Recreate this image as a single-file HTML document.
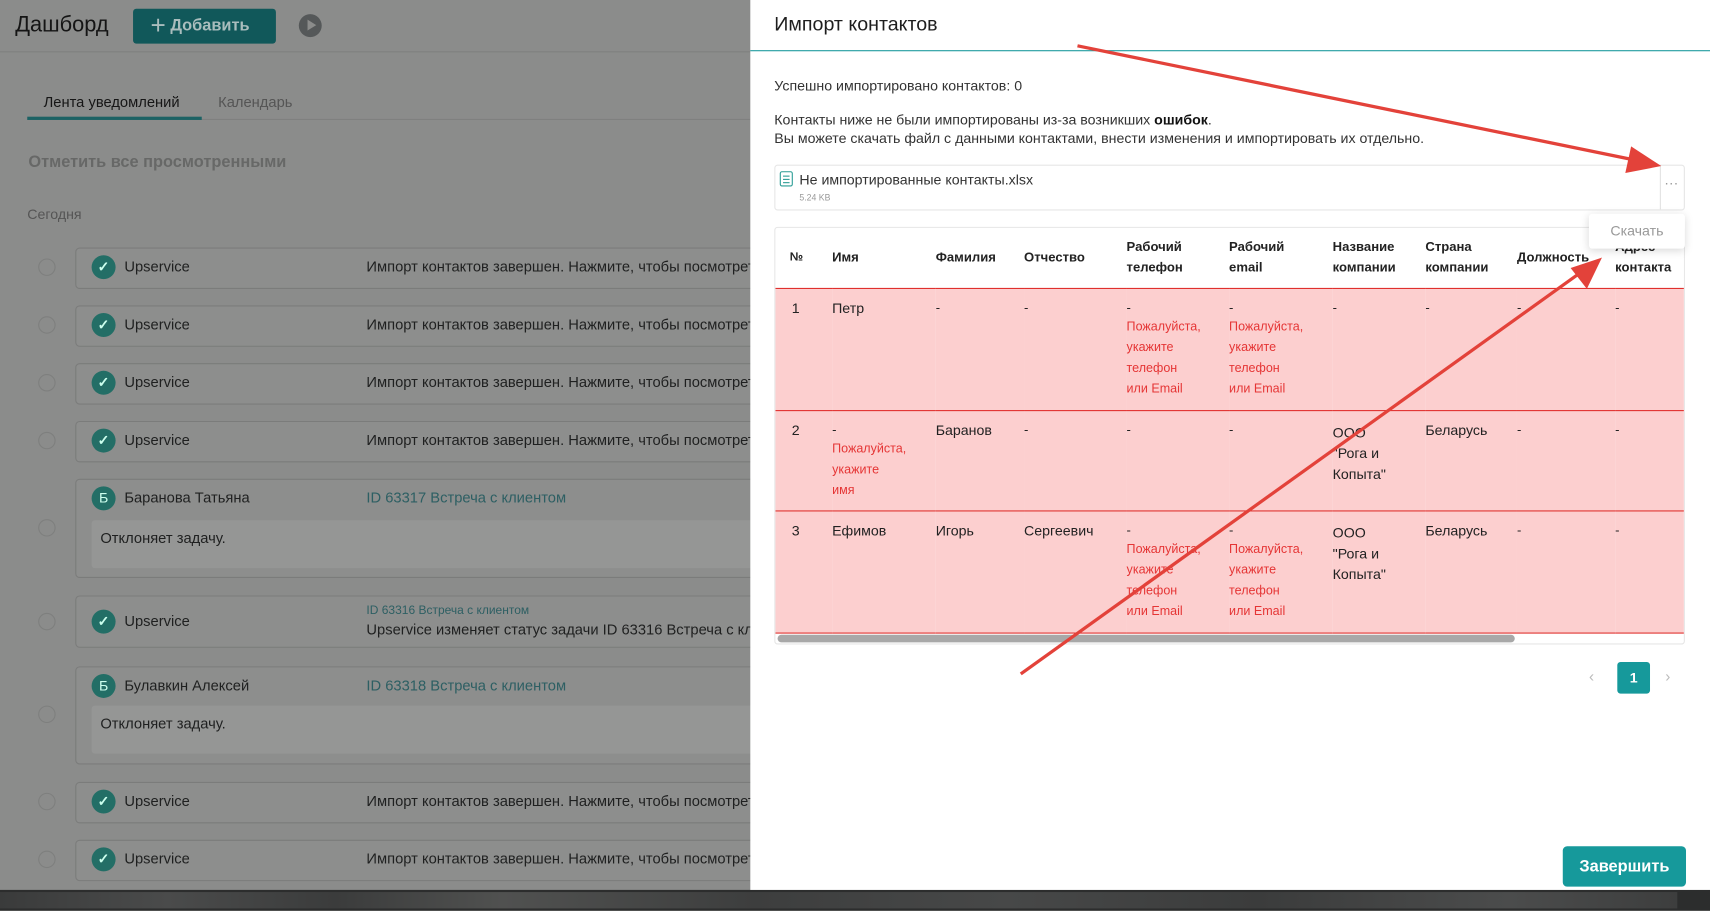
<!DOCTYPE html>
<html><head><meta charset="utf-8"><style>
*{box-sizing:border-box;margin:0;padding:0}
html,body{width:1710px;height:911px;overflow:hidden;background:#8b8c8b}
#s{position:absolute;left:0;top:0;width:1568px;height:835px;transform:scale(1.09056);transform-origin:0 0;font-family:"Liberation Sans",sans-serif;color:#222}
.a{position:absolute;white-space:nowrap}
.card{position:absolute;left:69px;width:640px;border:1px solid #7b7c7b;border-radius:4px;background:#8d8e8d}
.rad{position:absolute;left:35px;width:16px;height:16px;border:1px solid #7e7f7e;border-radius:50%}
.ic{position:absolute;left:84px;width:22px;height:22px;border-radius:50%;background:#236e66;color:#cfe;font-size:13px;text-align:center;line-height:22px;font-weight:bold}
.t{font-size:13.5px;color:#1f2020}
.lk{color:#2d5f63}
th,td{font-size:12px}
.red{color:#e53535;font-size:11.5px;line-height:19px}
</style></head><body><div id="s">
<div class="a" style="left:14px;top:12px;font-size:20px;color:#151515">Дашборд</div>
<div class="a" style="left:122px;top:8px;width:131px;height:32px;background:#11585a;border-radius:3px;color:#a9bdbd;font-size:15px;font-weight:bold;line-height:32px;padding-left:16px"><span style="font-size:24px;font-weight:normal;vertical-align:-3px">+</span> Добавить</div>
<div class="a" style="left:274px;top:13px;width:21px;height:21px;border-radius:50%;background:#555859"></div>
<div class="a" style="left:282px;top:18px;border-left:8px solid #8b8c8b;border-top:5.5px solid transparent;border-bottom:5.5px solid transparent"></div>
<div class="a" style="left:0;top:47px;width:688px;height:1px;background:#7f807f"></div>
<div class="a t" style="left:40px;top:86px;color:#161616">Лента уведомлений</div>
<div class="a t" style="left:200px;top:86px;color:#555">Календарь</div>
<div class="a" style="left:25px;top:109px;width:663px;height:1px;background:#7f807f"></div>
<div class="a" style="left:25px;top:107px;width:160px;height:3px;background:#1c6264"></div>
<div class="a" style="left:26px;top:140px;font-size:15px;font-weight:bold;color:#676867">Отметить все просмотренными</div>
<div class="a" style="left:25px;top:189px;font-size:13px;color:#555">Сегодня</div>

<div class="rad" style="top:237px"></div><div class="card" style="top:227px;height:38px"></div><div class="ic" style="top:234px">✓</div><div class="a t" style="left:114px;top:237px">Upservice</div><div class="a t" style="left:336px;top:237px">Импорт контактов завершен. Нажмите, чтобы посмотреть</div>
<div class="rad" style="top:290px"></div><div class="card" style="top:280px;height:38px"></div><div class="ic" style="top:287px">✓</div><div class="a t" style="left:114px;top:290px">Upservice</div><div class="a t" style="left:336px;top:290px">Импорт контактов завершен. Нажмите, чтобы посмотреть</div>
<div class="rad" style="top:343px"></div><div class="card" style="top:333px;height:38px"></div><div class="ic" style="top:340px">✓</div><div class="a t" style="left:114px;top:343px">Upservice</div><div class="a t" style="left:336px;top:343px">Импорт контактов завершен. Нажмите, чтобы посмотреть</div>
<div class="rad" style="top:396px"></div><div class="card" style="top:386px;height:38px"></div><div class="ic" style="top:393px">✓</div><div class="a t" style="left:114px;top:396px">Upservice</div><div class="a t" style="left:336px;top:396px">Импорт контактов завершен. Нажмите, чтобы посмотреть</div>

<div class="rad" style="top:476px"></div><div class="card" style="top:439px;height:91px"></div><div class="ic" style="top:446px;font-weight:normal">Б</div><div class="a t" style="left:114px;top:449px">Баранова Татьяна</div><div class="a t lk" style="left:336px;top:449px">ID 63317 Встреча с клиентом</div>
<div class="a" style="left:84px;top:477px;width:620px;height:44px;background:#959695;border-radius:3px"></div><div class="a t" style="left:92px;top:486px">Отклоняет задачу.</div>

<div class="rad" style="top:562px"></div><div class="card" style="top:546px;height:48px"></div><div class="ic" style="top:559px">✓</div><div class="a t" style="left:114px;top:562px">Upservice</div><div class="a lk" style="left:336px;top:554px;font-size:11px">ID 63316 Встреча с клиентом</div><div class="a t" style="left:336px;top:570px">Upservice изменяет статус задачи ID 63316 Встреча с клиентом</div>

<div class="rad" style="top:647px"></div><div class="card" style="top:611px;height:90px"></div><div class="ic" style="top:618px;font-weight:normal">Б</div><div class="a t" style="left:114px;top:621px">Булавкин Алексей</div><div class="a t lk" style="left:336px;top:621px">ID 63318 Встреча с клиентом</div>
<div class="a" style="left:84px;top:647px;width:620px;height:44px;background:#959695;border-radius:3px"></div><div class="a t" style="left:92px;top:656px">Отклоняет задачу.</div>

<div class="rad" style="top:727px"></div><div class="card" style="top:717px;height:38px"></div><div class="ic" style="top:724px">✓</div><div class="a t" style="left:114px;top:727px">Upservice</div><div class="a t" style="left:336px;top:727px">Импорт контактов завершен. Нажмите, чтобы посмотреть</div>
<div class="rad" style="top:780px"></div><div class="card" style="top:770px;height:38px"></div><div class="ic" style="top:777px">✓</div><div class="a t" style="left:114px;top:780px">Upservice</div><div class="a t" style="left:336px;top:780px">Импорт контактов завершен. Нажмите, чтобы посмотреть</div>

<div class="a" style="left:0;top:816px;width:1568px;height:19px;background:#2c2d2d"></div>
<div class="a" style="left:0;top:818px;width:1538px;height:15px;background:linear-gradient(90deg,#3a3b3b,#4a4b4b 10%,#3b3c3c 20%,#505150 30%,#3d3e3e 45%,#474848 60%,#3b3c3c 75%,#4b4c4c 90%,#3d3e3e)"></div>

<div class="a" style="left:688px;top:0;width:880px;height:816px;background:#fff"></div>
<div class="a" style="left:710px;top:12px;font-size:18px;color:#1e1e1e">Импорт контактов</div>
<div class="a" style="left:688px;top:46px;width:880px;height:1px;background:#1a9a9d"></div>
<div class="a" style="left:710px;top:71px;font-size:13px;color:#333">Успешно импортировано контактов: 0</div>
<div class="a" style="left:710px;top:102px;font-size:13px;color:#333">Контакты ниже не были импортированы из-за возникших <b style="color:#111">ошибок</b>.</div>
<div class="a" style="left:710px;top:119px;font-size:13px;color:#333">Вы можете скачать файл с данными контактами, внести изменения и импортировать их отдельно.</div>
<div class="a" style="left:710px;top:151px;width:835px;height:42px;border:1px solid #e6e6e6;border-radius:3px"></div>
<div class="a" style="left:1522px;top:152px;width:1px;height:40px;background:#e2e2e2"></div>
<div class="a" style="left:1526px;top:160px;font-size:13px;color:#999">···</div>
<div class="a" style="left:715px;top:157px;width:12px;height:14px;border:1.5px solid #2a9c94;border-radius:2px"></div>
<div class="a" style="left:718px;top:161px;width:6px;height:1px;background:#2a9c94;box-shadow:0 3px #2a9c94,0 6px #2a9c94"></div>
<div class="a" style="left:733px;top:157px;font-size:13px;color:#333">Не импортированные контакты.xlsx</div>
<div class="a" style="left:733px;top:177px;font-size:8px;color:#999">5.24 KB</div>

<div class="a" style="left:710px;top:208px;width:835px;height:383px;border:1px solid #e6e6e6;border-radius:3px;overflow:hidden">
<table style="position:absolute;left:0;top:0;width:834px;border-collapse:collapse;table-layout:fixed">
<colgroup><col style="width:52px"><col style="width:95px"><col style="width:81px"><col style="width:94px"><col style="width:94px"><col style="width:95px"><col style="width:85px"><col style="width:84px"><col style="width:90px"><col></colgroup>
<tr style="height:55px;background:#fff;color:#222;font-weight:bold;text-align:left">
<th style="padding-left:13px;font-size:11px">№</th><th>Имя</th><th>Фамилия</th><th>Отчество</th><th style="line-height:19px">Рабочий<br>телефон</th><th style="line-height:19px">Рабочий<br>email</th><th style="line-height:19px">Название<br>компании</th><th style="line-height:19px">Страна<br>компании</th><th>Должность</th><th style="line-height:19px">Адрес<br>контакта</th>
</tr>
<tr style="height:112px;background:#fccfcf;vertical-align:top;border-top:1.5px solid #e0302e">
<td style="padding:10px 0 0 15px;font-size:13px">1</td><td style="padding-top:10px;font-size:13px">Петр</td><td style="padding-top:10px">-</td><td style="padding-top:10px">-</td><td style="padding-top:10px">-<div class="red" style="margin-top:2px">Пожалуйста,<br>укажите<br>телефон<br>или Email</div></td><td style="padding-top:10px">-<div class="red" style="margin-top:2px">Пожалуйста,<br>укажите<br>телефон<br>или Email</div></td><td style="padding-top:10px">-</td><td style="padding-top:10px">-</td><td style="padding-top:10px">-</td><td style="padding-top:10px">-</td>
</tr>
<tr style="height:92px;background:#fccfcf;vertical-align:top;border-top:1.5px solid #e0302e">
<td style="padding:10px 0 0 15px;font-size:13px">2</td><td style="padding-top:10px">-<div class="red" style="margin-top:2px">Пожалуйста,<br>укажите<br>имя</div></td><td style="padding-top:10px;font-size:13px">Баранов</td><td style="padding-top:10px">-</td><td style="padding-top:10px">-</td><td style="padding-top:10px">-</td><td style="padding-top:10px;font-size:13px;line-height:19px">ООО<br>"Рога и<br>Копыта"</td><td style="padding-top:10px;font-size:13px">Беларусь</td><td style="padding-top:10px">-</td><td style="padding-top:10px">-</td>
</tr>
<tr style="height:112px;background:#fccfcf;vertical-align:top;border-top:1.5px solid #e0302e;border-bottom:1.5px solid #e0302e">
<td style="padding:10px 0 0 15px;font-size:13px">3</td><td style="padding-top:10px;font-size:13px">Ефимов</td><td style="padding-top:10px;font-size:13px">Игорь</td><td style="padding-top:10px;font-size:13px">Сергеевич</td><td style="padding-top:10px">-<div class="red" style="margin-top:2px">Пожалуйста,<br>укажите<br>телефон<br>или Email</div></td><td style="padding-top:10px">-<div class="red" style="margin-top:2px">Пожалуйста,<br>укажите<br>телефон<br>или Email</div></td><td style="padding-top:10px;font-size:13px;line-height:19px">ООО<br>"Рога и<br>Копыта"</td><td style="padding-top:10px;font-size:13px">Беларусь</td><td style="padding-top:10px">-</td><td style="padding-top:10px">-</td>
</tr>
</table>
<div class="a" style="left:2px;top:373px;width:676px;height:7px;background:#a8a8a8;border-radius:4px"></div>
</div>
<div class="a" style="left:1457px;top:196px;width:88px;height:32px;background:#fff;box-shadow:0 2px 8px rgba(0,0,0,.15);border-radius:3px;color:#999;font-size:13px;line-height:32px;text-align:center">Скачать</div>

<div class="a" style="left:1457px;top:612px;color:#bbb;font-size:14px">‹</div>
<div class="a" style="left:1483px;top:607px;width:30px;height:29px;background:#16999b;border-radius:3px;color:#fff;font-size:13px;font-weight:bold;text-align:center;line-height:29px">1</div>
<div class="a" style="left:1527px;top:612px;color:#bbb;font-size:14px">›</div>
<div class="a" style="left:1433px;top:776px;width:113px;height:37px;background:#16999b;border-radius:4px;color:#fff;font-size:15px;font-weight:bold;text-align:center;line-height:37px">Завершить</div>

<svg class="a" style="left:0;top:0" width="1568" height="835">
<g stroke="#e3423a" stroke-width="3" fill="#e3423a">
<line x1="988" y1="42" x2="1505" y2="148"/>
<polygon points="1522,152 1496,135 1491,158" stroke-width="1"/>
<line x1="936" y1="618" x2="1452" y2="248"/>
<polygon points="1468,237 1441,246 1455,264" stroke-width="1"/>
</g></svg>
</div></body></html>
